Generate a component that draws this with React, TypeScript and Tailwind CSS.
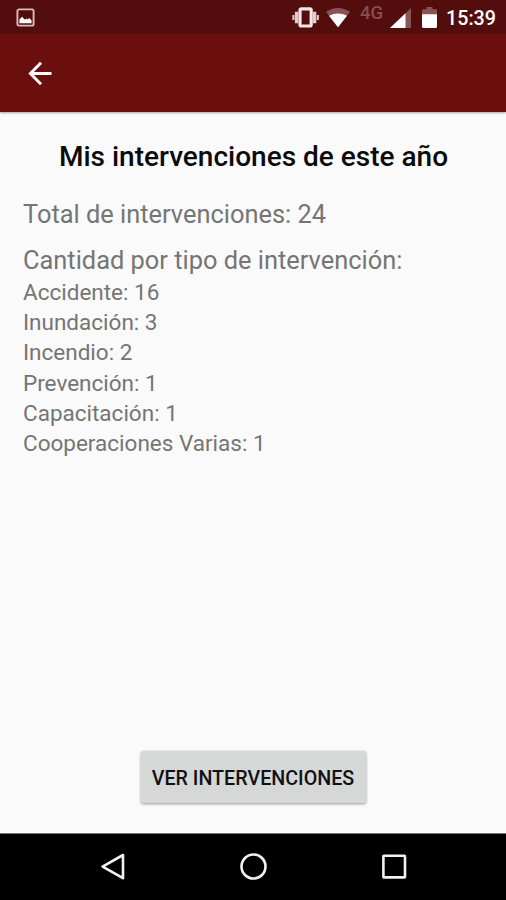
interface Intervention {
  label: string;
  count: number;
}

const interventions: Intervention[] = [
  { label: 'Accidente', count: 16 },
  { label: 'Inundación', count: 3 },
  { label: 'Incendio', count: 2 },
  { label: 'Prevención', count: 1 },
  { label: 'Capacitación', count: 1 },
  { label: 'Cooperaciones Varias', count: 1 }
];

function StatusBar() {
  return (
    <div className="flex h-[34px] items-start bg-[#530d0d] text-white">
      {/* Screenshot notification */}
      <svg className="mt-2 ml-4 h-[19px] w-[19px]" viewBox="0 0 19 19" fill="none">
        <rect x="1.4" y="1.4" width="16.2" height="16.2" rx="1.6" stroke="#d9bcbc" strokeWidth="1.9" />
        <path d="M3.4 15.3v-3.8l2.6-2.8 3 3 1.3-1.3 1.4 1.2 1.6-1.6 2.3 2.4v2.9z" fill="#fff" />
      </svg>

      {/* Vibrate */}
      <svg className="mt-[7px] ml-[257px] h-[21px] w-[27px]" viewBox="0 0 27 21" fill="none">
        <rect x="8" y="1.8" width="11.2" height="17.2" rx="1.2" stroke="#f4e6e6" strokeWidth="3.2" />
        <path d="M4.6 4.8v11.4M22.6 4.8v11.4" stroke="#e3cccc" strokeWidth="3.4" />
        <path d="M1.4 8v5M25.8 8v5" stroke="#dfc5c5" strokeWidth="2.2" />
      </svg>

      {/* Wifi */}
      <svg className="mt-2 ml-[7px] h-5 w-6" viewBox="0 0 24 20">
        <path d="M0 3.8Q12-3.8 24 3.8L12 19.3z" fill="#8b5454" />
        <path d="M3 7.7Q12 3.2 21 7.7L12 19.3z" fill="#fff" />
      </svg>

      <span className="mt-[3px] ml-[10px] w-[25px] text-[18.5px] leading-5 font-medium text-[#864e4e]">4G</span>

      {/* Signal */}
      <svg className="mt-2 ml-[5px] h-5 w-[21px]" viewBox="0 0 21 20">
        <path d="M21 0v20H0z" fill="#8b5454" />
        <path d="M15.5 5.2V20H0z" fill="#fff" />
      </svg>

      {/* Battery */}
      <svg className="mt-[7px] ml-[11px] h-[21px] w-[15px]" viewBox="0 0 15 21">
        <path d="M4.5 0h6v2.2h3.3c.7 0 1.2.5 1.2 1.2V8H0V3.4c0-.7.5-1.2 1.2-1.2h3.3z" fill="#8b5454" />
        <path d="M0 7.3h15v12.3c0 .8-.5 1.3-1.2 1.3H1.2c-.7 0-1.2-.5-1.2-1.3z" fill="#fff" />
      </svg>

      <span className="mt-2 ml-[9px] text-[19.7px] leading-[21px] font-medium">15:39</span>
    </div>
  );
}

function Toolbar() {
  return (
    <header className="relative flex h-[78px] items-center bg-[#6a0f0d] shadow-[0_1px_2px_rgba(0,0,0,0.35)]">
      <button aria-label="Volver" className="ml-7">
        <svg className="h-6 w-6" viewBox="0 0 24 24" fill="none" stroke="#fff" strokeWidth="2.9">
          <path d="M23.5 12.5H3M13 1.8L2.4 12.5 13 23.2" />
        </svg>
      </button>
    </header>
  );
}

function NavigationBar() {
  return (
    <nav className="flex h-[67px] items-center justify-center gap-[113px] border-t border-[#777] bg-black">
      <svg className="h-7 w-7" viewBox="0 0 28 28" fill="none" stroke="#f2f2f2" strokeWidth="2.6">
        <path d="M25 2v23.2L4.6 13.6z" strokeLinejoin="round" />
      </svg>
      <svg className="h-7 w-7" viewBox="0 0 28 28" fill="none" stroke="#f2f2f2" strokeWidth="2.6">
        <circle cx="14.5" cy="13.5" r="12" />
      </svg>
      <svg className="h-7 w-7" viewBox="0 0 28 28" fill="none" stroke="#f2f2f2" strokeWidth="2.6">
        <rect x="3.4" y="2.8" width="21.6" height="21.6" rx="0.6" />
      </svg>
    </nav>
  );
}

export default function App() {
  const total = interventions.reduce((sum, item) => sum + item.count, 0);

  return (
    <div className="flex h-[900px] w-[506px] flex-col overflow-hidden bg-[#fafafa] font-[Roboto,sans-serif]">
      <StatusBar />
      <Toolbar />

      <main className="flex flex-1 flex-col px-[23px] text-[#757575]">
        <h1 className="mt-[29px] pl-px text-center text-[28px] leading-8 font-medium text-[#0a0a0a]">
          Mis intervenciones de este año
        </h1>
        <p className="mt-[26px] text-[25.4px] leading-[30px]">Total de intervenciones: {total}</p>
        <p className="mt-4 text-[25.4px] leading-[30px]">Cantidad por tipo de intervención:</p>
        <ul className="mt-[2px] text-[22.5px] leading-[30.2px]">
          {interventions.map((item) => (
            <li key={item.label}>
              {item.label}: {item.count}
            </li>
          ))}
        </ul>

        <button className="mt-auto mb-[30px] h-[52px] w-[225px] self-center rounded-[2px] bg-[#d6d8d7] pt-[3px] text-[19.7px] font-medium whitespace-nowrap text-[#111] shadow-[0_1px_3px_rgba(0,0,0,0.4)]">
          VER INTERVENCIONES
        </button>
      </main>

      <NavigationBar />
    </div>
  );
}
